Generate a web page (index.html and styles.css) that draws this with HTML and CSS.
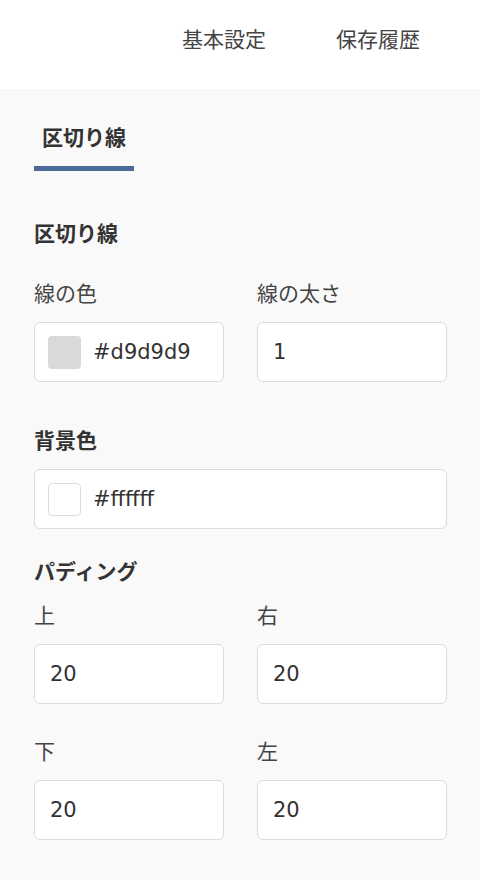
FILE: index.html
```html
<!DOCTYPE html>
<html lang="ja">
<head>
<meta charset="utf-8">
<title>区切り線</title>
<link rel="stylesheet" href="styles.css">
</head>
<body>
<header class="topbar">
  <nav class="topnav">
    <span class="topnav-item">基本設定</span>
    <span class="topnav-item">保存履歴</span>
  </nav>
</header>
<main class="panel">
  <div class="tabs">
    <div class="tab tab-active">区切り線</div>
  </div>

  <h2 class="section-title first">区切り線</h2>
  <div class="grid2 row-first">
    <div class="field">
      <div class="label">線の色</div>
      <div class="input">
        <span class="swatch swatch-grey"></span>
        <span class="value">#d9d9d9</span>
      </div>
    </div>
    <div class="field">
      <div class="label">線の太さ</div>
      <div class="input"><span class="value">1</span></div>
    </div>
  </div>

  <h2 class="section-title bg">背景色</h2>
  <div class="input input-gap">
    <span class="swatch swatch-white"></span>
    <span class="value">#ffffff</span>
  </div>

  <h2 class="section-title pad">パディング</h2>
  <div class="grid2 row-pad1">
    <div class="field">
      <div class="label">上</div>
      <div class="input"><span class="value">20</span></div>
    </div>
    <div class="field">
      <div class="label">右</div>
      <div class="input"><span class="value">20</span></div>
    </div>
  </div>
  <div class="grid2 row-pad2">
    <div class="field">
      <div class="label">下</div>
      <div class="input"><span class="value">20</span></div>
    </div>
    <div class="field">
      <div class="label">左</div>
      <div class="input"><span class="value">20</span></div>
    </div>
  </div>
</main>
</body>
</html>
```
FILE: styles.css
```css
* { box-sizing: border-box; }
html, body {
  margin: 0;
  padding: 0;
}
body {
  background: #f9f9f9;
  font-family: "DejaVu Sans", "Noto Sans CJK JP", sans-serif;
  font-size: 21px;
  line-height: 30px;
  color: #333;
  width: 480px;
  min-height: 880px;
}
.topbar {
  background: #fff;
  border-bottom: 1px solid #f0f0f0;
  height: 91px;
  padding-top: 25px;
}
.topnav {
  display: flex;
  justify-content: flex-end;
  gap: 70px;
  padding-right: 60px;
}
.topnav-item {
  color: #444;
}
.panel {
  padding: 0 33px 40px 34px;
}
.tabs {
  display: flex;
  margin-top: 32px;
}
.tab {
  padding: 0 8px 13px 8px;
  font-weight: bold;
  color: #333;
}
.tab-active {
  border-bottom: 5px solid #4a6a99;
}
.section-title {
  margin: 0;
  font-size: 21px;
  line-height: 30px;
  font-weight: bold;
  color: #333;
}
.section-title.first { margin-top: 48px; }
.section-title.bg { margin-top: 44px; }
.section-title.pad { margin-top: 28px; }
.grid2 {
  display: grid;
  grid-template-columns: 1fr 1fr;
  column-gap: 33px;
}
.row-first { margin-top: 30px; }
.row-pad1 { margin-top: 14px; }
.row-pad2 { margin-top: 33px; }
.label {
  color: #444;
  margin-bottom: 13px;
}
.input {
  height: 60px;
  background: #fff;
  border: 1px solid #dcdcdc;
  border-radius: 6px;
  display: flex;
  align-items: center;
  padding: 0 15px;
  gap: 12px;
}
.input-gap { margin-top: 13px; }
.input .swatch { margin-left: -2px; }
.value {
  color: #333;
}
.swatch {
  width: 33px;
  height: 33px;
  border-radius: 4px;
  flex: none;
}
.swatch-grey {
  background: #d9d9d9;
}
.swatch-white {
  background: #fff;
  border: 1px solid #dcdcdc;
}
```
